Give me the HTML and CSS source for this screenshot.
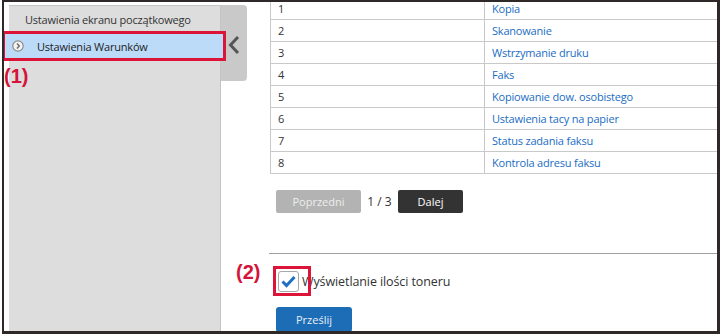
FILE: index.html
```html
<!DOCTYPE html>
<html lang="pl">
  <head>
    <meta charset="UTF-8" />
    <meta name="viewport" content="width=device-width, initial-scale=1.0" />
    <title>Ustawienia Warunków</title>
    <link rel="stylesheet" href="styles.css">
  </head>

  <body>
    <div class="frame">
      <aside class="sidebar">
        <div class="menu-title">Ustawienia ekranu początkowego</div>
        <div class="menu-item selected">
          <span class="item-icon">
            <svg width="12" height="12" viewBox="0 0 12 12">
              <circle cx="6" cy="6" r="5.2" fill="#f4f4f4" stroke="#8a8a8a" stroke-width="1.2" />
              <polyline points="5,3.6 7.3,6 5,8.4" fill="none" stroke="#6a6a6a" stroke-width="1.4" />
            </svg>
          </span>
          Ustawienia Warunków
        </div>
      </aside>

      <div class="collapse-tab">
        <svg width="26" height="76" viewBox="0 0 26 76">
          <polyline points="17,32 9.5,40 17,48" fill="none" stroke="#555" stroke-width="3" />
        </svg>
      </div>

      <main class="content">
        <table class="job-table">
          <tr><td class="num">1</td><td class="link">Kopia</td></tr>
          <tr><td class="num">2</td><td class="link">Skanowanie</td></tr>
          <tr><td class="num">3</td><td class="link">Wstrzymanie druku</td></tr>
          <tr><td class="num">4</td><td class="link">Faks</td></tr>
          <tr><td class="num">5</td><td class="link">Kopiowanie dow. osobistego</td></tr>
          <tr><td class="num">6</td><td class="link">Ustawienia tacy na papier</td></tr>
          <tr><td class="num">7</td><td class="link">Status zadania faksu</td></tr>
          <tr><td class="num">8</td><td class="link">Kontrola adresu faksu</td></tr>
        </table>

        <div class="pager">
          <button class="pager-btn prev">Poprzedni</button>
          <span class="page-count">1 / 3</span>
          <button class="pager-btn next">Dalej</button>
        </div>

        <hr class="divider" />

        <label class="toner-option">
          <span class="checkbox">
            <svg width="21" height="21" viewBox="0 0 21 21">
              <polyline points="4.5,10.5 8.5,14.5 16.5,6" fill="none" stroke="#1f6fc2" stroke-width="3" />
            </svg>
          </span>
          Wyświetlanie ilości toneru
        </label>

        <button class="submit">Prześlij</button>
      </main>

      <span class="callout callout-one">(1)</span>
      <span class="callout callout-two">(2)</span>
    </div>
  </body>
</html>
```

FILE: styles.css
```css
body {
  margin: 0;
  font-family: "Open Sans", sans-serif;
  color: #333;
  background: white;
}

.frame {
  position: relative;
  display: flex;
  align-items: flex-start;
  box-sizing: border-box;
  width: 718px;
  height: 334px;
  margin-left: 2px;
  border-style: solid;
  border-color: #2e2828;
  border-width: 2px 3px 3px 2px;
  overflow: hidden;
  background: white;
}

/* left menu */
.sidebar {
  align-self: stretch;
  box-sizing: border-box;
  width: 212px;
  flex-shrink: 0;
  margin: 3px 0 0 5px;
  background: #dddddd;
  border-top: 1px solid #c4c4c4;
  border-right: 1px solid #c4c4c4;
  font-size: 11px;
  letter-spacing: -0.2px;
}

.menu-title {
  padding: 6px 0 4px 16px;
  line-height: 16px;
  color: #333;
}

.menu-item {
  display: flex;
  align-items: center;
  height: 28px;
  padding-left: 3px;
  color: #222;
}

.menu-item.selected {
  position: relative;
  z-index: 0;
}

.menu-item.selected::before {
  content: "";
  position: absolute;
  z-index: -1;
  left: -7px;
  right: -6px;
  top: -1px;
  bottom: -1px;
  background: #bcdbf9;
  border: 3px solid #dc1437;
}

.item-icon {
  display: flex;
  width: 12px;
  height: 12px;
  margin-right: 13px;
}

.collapse-tab {
  flex-shrink: 0;
  width: 26px;
  height: 76px;
  margin-top: 3px;
  background: #c9c9c9;
  border-radius: 0 4px 4px 0;
}

/* main area */
.content {
  flex: 1;
  min-width: 0;
  margin: -5px 0 0 23px;
}

.job-table {
  width: 470px;
  border-collapse: collapse;
  font-size: 11px;
  letter-spacing: -0.2px;
}

.job-table td {
  height: 21px;
  padding: 0 7px;
  line-height: 21px;
  border: 1px solid #c9c9c9;
}

.job-table .num {
  width: 199px;
  color: #333;
}

.job-table .link {
  color: #1b6dc4;
}

.pager {
  display: flex;
  align-items: center;
  margin-top: 16px;
  padding-left: 6px;
}

.pager-btn {
  height: 23px;
  padding: 0;
  border: none;
  border-radius: 2px;
  font-family: "Open Sans", sans-serif;
  font-size: 11px;
}

.prev {
  width: 85px;
  background: #b3b3b3;
  color: #eeeeee;
}

.next {
  width: 65px;
  background: #333333;
  color: white;
}

.page-count {
  width: 37px;
  text-align: center;
  font-size: 12px;
  color: #333;
}

.divider {
  height: 1px;
  margin: 40px 0 0 -1px;
  border: none;
  background: #a0a0a0;
}

.toner-option {
  display: flex;
  align-items: center;
  height: 21px;
  margin-top: 17px;
  font-size: 12.5px;
  letter-spacing: -0.1px;
  color: #333;
}

.checkbox {
  position: relative;
  box-sizing: border-box;
  width: 21px;
  height: 21px;
  margin: 0 3px 0 8px;
  background: white;
  border: 1px solid #a8a8a8;
  border-radius: 3px;
}

.checkbox svg {
  position: absolute;
  left: -1px;
  top: -1px;
}

.checkbox::after {
  content: "";
  position: absolute;
  left: -6px;
  top: -6px;
  width: 32px;
  height: 24px;
  border: 3px solid #dc1437;
}

.submit {
  display: block;
  width: 76px;
  height: 25px;
  margin: 15px 0 0 6px;
  border: none;
  border-radius: 3px;
  background: #1c6db6;
  color: #e8eff8;
  font-family: "Open Sans", sans-serif;
  font-size: 11px;
}

/* red annotation labels */
.callout {
  position: absolute;
  font-family: "Liberation Sans", Arial, sans-serif;
  font-weight: bold;
  font-size: 20px;
  line-height: 20px;
  color: #d4143a;
}

.callout-one {
  left: 0;
  top: 64px;
}

.callout-two {
  left: 232px;
  top: 260px;
}
```
